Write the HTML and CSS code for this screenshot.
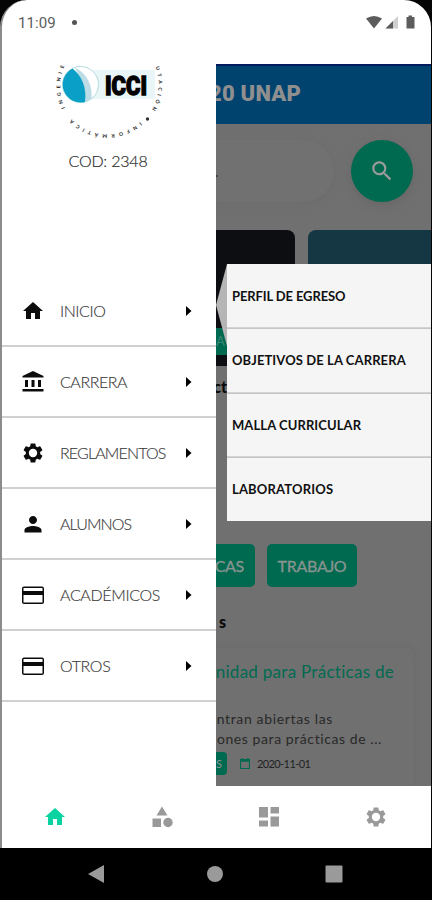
FILE: index.html
```html
<!DOCTYPE html>
<html lang="es">
<head>
<meta charset="utf-8">
<title>ICCI</title>
<link rel="stylesheet" href="styles.css">
</head>
<body>
<svg width="0" height="0" class="defs">
  <symbol id="home" viewBox="0 0 24 24"><path d="M10 20v-6h4v6h5v-8h3L12 3 2 12h3v8z"/></symbol>
  <symbol id="bank" viewBox="0 0 24 24"><path d="M4 10h3v7H4zM10.500 10h3v7h-3zM1.500 19h21v2.500h-21zM17 10h3v7h-3zM12 1 1.500 6v1.500h21V6z"/></symbol>
  <symbol id="gear" viewBox="0 0 24 24"><path d="M19.14 12.94c.04-.3.06-.61.06-.94 0-.32-.02-.64-.07-.94l2.03-1.58a.49.49 0 0 0 .12-.61l-1.92-3.32a.488.488 0 0 0-.59-.22l-2.39.96c-.5-.38-1.03-.7-1.62-.94l-.36-2.54a.484.484 0 0 0-.48-.41h-3.84c-.24 0-.43.17-.47.41l-.36 2.54c-.59.24-1.13.57-1.62.94l-2.39-.96c-.22-.08-.47 0-.59.22L2.74 8.87c-.12.21-.08.47.12.61l2.03 1.58c-.05.3-.09.63-.09.94s.02.64.07.94l-2.03 1.58a.49.49 0 0 0-.12.61l1.92 3.32c.12.22.37.29.59.22l2.39-.96c.5.38 1.03.7 1.62.94l.36 2.54c.05.24.24.41.48.41h3.84c.24 0 .44-.17.47-.41l.36-2.54c.59-.24 1.13-.56 1.62-.94l2.39.96c.22.08.47 0 .59-.22l1.92-3.32c.12-.22.07-.47-.12-.61l-2.01-1.58zM12 16.2a4.2 4.2 0 1 1 0-8.4 4.2 4.2 0 0 1 0 8.4z"/></symbol>
  <symbol id="person" viewBox="0 0 24 24"><path d="M12 12c2.210 0 4-1.790 4-4s-1.790-4-4-4-4 1.790-4 4 1.790 4 4 4zm0 2c-2.670 0-8.500 1.340-8.500 4v2.500h17V18c0-2.660-5.830-4-8.500-4z"/></symbol>
  <symbol id="card" viewBox="0 0 24 24"><path d="M21 3.500H3c-1.110 0-1.990.890-1.990 2L1 19c0 1.110.890 2 2 2h18c1.110 0 2-.890 2-2V5.500c0-1.110-.890-2-2-2zm.5 16h-19V12h19zm0-11.500h-19V5h19z"/></symbol>
  <symbol id="shapes" viewBox="0 0 24 24"><path d="M12 1.500 6.500 10.500h11zM2.500 13.500h8.500v8.500H2.500z"/><circle cx="18" cy="17.500" r="4.700"/></symbol>
  <symbol id="dash" viewBox="0 0 24 24"><path d="M2 2h9v10.500H2zM2 15.500h9v6H2zM13.500 11.500h8.500v10h-8.500zM13.500 2h8.500v6.500h-8.500z"/></symbol>
  <symbol id="search" viewBox="0 0 24 24"><path d="M15.500 14h-.790l-.280-.270A6.471 6.471 0 0 0 16 9.500 6.500 6.500 0 1 0 9.500 16c1.610 0 3.090-.590 4.230-1.570l.270.280v.790l5 4.990L20.490 19l-4.990-5zm-6 0C7.010 14 5 11.990 5 9.500S7.010 5 9.500 5 14 7.010 14 9.500 11.990 14 9.500 14z"/></symbol>
  <symbol id="caret" viewBox="0 0 6 10"><path d="M0 0l5.500 5L0 10z"/></symbol>
</svg>

<div class="phone">
  <header class="status">
    <span class="clock">11:09</span>
    <span class="dot"></span>
    <svg class="signals" viewBox="0 0 50 16">
      <path d="M0 3.500q8-5 16 0L8 13.500z"/>
      <path class="faint" d="M32 1v12.500H19.500z"/><path d="M27 6v7.500h-7.500z"/>
      <path d="M40.500 2h2V.500H46V2h2.500v11.500h-8z"/>
    </svg>
  </header>

  <main class="main">
    <nav class="drawer">
      <div class="brand">
        <svg class="logo" width="120" height="84" viewBox="48 60 120 84">
          <rect x="80" y="70" width="74" height="29" fill="#eaf5f7"/>
          <circle cx="79.500" cy="84.500" r="18" fill="#fff" stroke="#9fd3d6" stroke-width=".8"/>
          <path d="M74 67.500C86 73 92 86 90.500 98.500Q87 101.500 82 102.500L83 89z" fill="#bcdce6"/>
          <path d="M71.500 68.500C81 76 86 88 84 102A18 18 0 0 1 71.500 68.500z" fill="#0a9fc6"/>
          <text class="mark" x="104" y="94.500" textLength="42" lengthAdjust="spacingAndGlyphs">ICCI</text>
          <path id="arcR" d="M154.500 67A50 50 0 0 1 150.500 110" fill="none"/>
          <path id="arcB" d="M139 122A50 50 0 0 1 71 119.500" fill="none"/>
          <path id="arcL" d="M64 108A50 50 0 0 1 64 65" fill="none"/>
          <g class="ring">
            <text><textPath href="#arcR" textLength="44">UTACIÓN</textPath></text>
            <text><textPath href="#arcB" textLength="75">INFORMÁTICA</textPath></text>
            <text><textPath href="#arcL" textLength="43">INGENIE</textPath></text>
          </g>
          <circle cx="146.500" cy="119" r="1.700" fill="#333"/>
        </svg>
        <div class="cod">COD: 2348</div>
      </div>
      <a class="item"><svg class="ico"><use href="#home"/></svg><span class="l1">INICIO</span><svg class="caret"><use href="#caret"/></svg></a>
      <a class="item"><svg class="ico"><use href="#bank"/></svg><span class="l2">CARRERA</span><svg class="caret"><use href="#caret"/></svg></a>
      <a class="item"><svg class="ico"><use href="#gear"/></svg><span class="l3">REGLAMENTOS</span><svg class="caret"><use href="#caret"/></svg></a>
      <a class="item"><svg class="ico"><use href="#person"/></svg><span class="l4">ALUMNOS</span><svg class="caret"><use href="#caret"/></svg></a>
      <a class="item"><svg class="ico"><use href="#card"/></svg><span class="l5">ACADÉMICOS</span><svg class="caret"><use href="#caret"/></svg></a>
      <a class="item"><svg class="ico"><use href="#card"/></svg><span class="l6">OTROS</span><svg class="caret"><use href="#caret"/></svg></a>
    </nav>

    <section class="page">
      <div class="appbar"><span>20 UNAP</span></div>
      <div class="searchrow">
        <div class="field"><i></i></div>
        <div class="go"><svg><use href="#search"/></svg></div>
      </div>
      <div class="slides">
        <div class="slide night"><span class="tag">A</span></div>
        <div class="slide teal"></div>
      </div>
      <div class="clip h1"><span>ct</span></div>
      <div class="chips">
        <div class="chip first"><span>CAS</span></div>
        <div class="chip"><span>TRABAJO</span></div>
      </div>
      <div class="clip h2"><span>s</span></div>
      <article class="post">
        <div class="title"><span>nidad para Prácticas de</span></div>
        <div class="body b1"><span>ntran abiertas las</span></div>
        <div class="body b2"><span>ones para prácticas de ...</span></div>
        <div class="meta">
          <span class="badge">S</span>
          <svg class="cal" viewBox="0 0 10 11"><path d="M0 1h1.500V0h1.300v1h4.400V0h1.300v1H10v10H0zM1.100 3.800v6.100h7.800V3.800z" fill-rule="evenodd"/></svg>
          <span class="date">2020-11-01</span>
        </div>
      </article>
    </section>

    <div class="submenu">
      <a class="s1"><span>PERFIL DE EGRESO</span></a>
      <a class="s2"><span>OBJETIVOS DE LA CARRERA</span></a>
      <a class="s3"><span>MALLA CURRICULAR</span></a>
      <a class="s4"><span>LABORATORIOS</span></a>
    </div>
  </main>

  <footer class="tabs">
    <svg class="on"><use href="#home"/></svg>
    <svg><use href="#shapes"/></svg>
    <svg><use href="#dash"/></svg>
    <svg><use href="#gear"/></svg>
  </footer>
</div>
<div class="sysnav">
  <svg viewBox="0 0 18 20"><path d="M1 10 17 1v18z"/></svg>
  <svg viewBox="0 0 18 20"><circle cx="9" cy="10" r="8"/></svg>
  <svg viewBox="0 0 18 20"><rect x=".5" y="1.500" width="17" height="17" rx="1"/></svg>
</div>
</body>
</html>
```
FILE: styles.css
```css
* { box-sizing: border-box; }
body { margin: 0; width: 432px; height: 900px; background: #050505; overflow: hidden; font-family: Lato, "Open Sans", sans-serif; }
.defs { display: block; }
.phone { height: 848px; width: 431px; border-left: 2px solid #8b8b8b; border-radius: 27px 27px 0 0; background: #fff; overflow: hidden; }
span { white-space: nowrap; }

.status { height: 64px; padding: 15px 15px 0 16px; display: flex; align-items: flex-start; color: #5c5c5c; }
.clock { font: 15px/16px Roboto, sans-serif; letter-spacing: .1px; }
.dot { width: 5px; height: 5px; border-radius: 50%; background: #555; margin: 5px 0 0 16px; }
.signals { width: 50px; height: 16px; margin-left: auto; fill: #5c5c5c; }
.signals .faint { fill: #cfcfcf; }

.main { position: relative; display: flex; height: 722px; }
.drawer { width: 214px; flex: none; }
.brand { height: 212px; display: flex; flex-direction: column; align-items: center; }
.logo { display: block; margin: -4px 0 0 0; }
.mark { font: 900 26px Roboto, sans-serif; fill: #000; stroke: #000; stroke-width: 1.300px; }
.ring { font: 900 5px Lato, sans-serif; fill: #333; }
.cod { font: 300 16px/20px Lato, sans-serif; letter-spacing: -.2px; color: #222; margin: 7px 2px 0 0; -webkit-text-stroke: .2px #444; }
.item { height: 71px; display: flex; align-items: center; padding: 0 24px 0 19px; border-bottom: 2px solid #cfd1d1; color: #333; font: 300 16px/20px Lato, sans-serif; -webkit-text-stroke: .15px #555; }
.l1 { letter-spacing: -.45px; }
.l2 { letter-spacing: -.45px; }
.l3 { letter-spacing: -.85px; }
.l4 { letter-spacing: -.9px; }
.l5 { letter-spacing: -.35px; }
.l6 { letter-spacing: -.35px; }
.ico { width: 24px; height: 24px; flex: none; margin-right: 15px; fill: #0c0c0c; }
.caret { width: 6px; height: 10px; margin-left: auto; fill: #000; }

.page { flex: none; width: 215px; background: #707070; overflow: hidden; }
.appbar { height: 60px; width: 215px; background: #00436f; border-top: 2px solid #001c5e; display: flex; align-items: center; justify-content: flex-end; padding: 0 130px 3px 0; font: 900 22px Roboto, sans-serif; letter-spacing: .2px; color: #8f8f8f; }
.searchrow { height: 106px; padding-top: 16px; display: flex; justify-content: space-between; }
.field { width: 118px; height: 62px; border-radius: 0 31px 31px 0; background: #717171; box-shadow: 0 1px 6px #6b6b6b; padding-top: 35px; }
.field i { display: block; width: 2px; height: 2px; background: #444; }
.go { width: 62px; height: 62px; margin-right: 18px; border-radius: 50%; background: #006a50; box-shadow: 0 3px 8px #666; display: grid; place-items: center; }
.go svg { width: 26px; height: 26px; fill: #9b9b9b; margin-right: 1px; }
.slides { height: 136px; display: flex; gap: 13px; }
.slide { flex: none; height: 136px; }
.night { width: 79px; background: #0c0e12; border-radius: 0 8px 0 0; padding-top: 98px; }
.tag { display: block; width: 34px; height: 27px; background: #006a50; color: #3c8674; font: 13px/27px Lato, sans-serif; }
.teal { width: 150px; background: #153643; border-radius: 8px 0 0 0; }
.clip { display: flex; justify-content: flex-end; color: #0a0a0a; font: 900 16px/20px Lato, sans-serif; }
.h1 { width: 11px; height: 20px; margin-top: 11px; }
.h2 { width: 10px; height: 20px; margin-top: 25px; }
.chips { display: flex; gap: 12px; margin-top: 147px; height: 43px; }
.chip { width: 90px; border-radius: 5px; background: #006a50; color: #899490; display: flex; align-items: center; justify-content: center; font: 16px Lato, sans-serif; letter-spacing: -.3px; -webkit-text-stroke: .3px #899490; }
.chip.first { width: 39px; border-radius: 0 5px 5px 0; justify-content: flex-end; padding-right: 11px; }
.post { width: 197px; margin-top: 16px; height: 160px; background: #707070; border-radius: 0 5px 5px 0; box-shadow: 0 0 6px #696969; padding-top: 13px; }
.title { height: 21px; width: 178px; display: flex; justify-content: flex-end; font: 17px/21px Lato, sans-serif; letter-spacing: .28px; color: #006b50; }
.body { height: 20px; display: flex; justify-content: flex-end; font: 14px/20px Lato, sans-serif; color: #292929; }
.b1 { width: 117px; margin-top: 27px; letter-spacing: .65px; }
.b2 { width: 166px; letter-spacing: .58px; }
.meta { display: flex; align-items: center; height: 23px; margin-top: 3px; }
.badge { width: 11px; height: 23px; background: #006a50; border-radius: 0 4px 4px 0; font: 11px/23px Lato, sans-serif; color: #8a9a95; overflow: hidden; }
.cal { width: 10px; height: 11px; margin: 0 7px 0 13px; fill: #006a50; }
.date { font: 11px Lato, sans-serif; letter-spacing: -.6px; color: #222; }

.submenu { position: absolute; left: 225px; top: 200px; width: 204px; height: 257px; background: #f5f5f5; }
.submenu::before { content: ""; position: absolute; left: -11px; top: 0; width: 11px; height: 82px; background: #b5b5b5; clip-path: polygon(100% 0, 0 50%, 100% 100%); }
.submenu a { display: flex; align-items: center; height: 64.300px; padding-left: 5px; font: bold 13px Lato, sans-serif; color: #111; }
.submenu a + a { box-shadow: 0 -1px 0 #d2d4d4, inset 0 1px 0 #c4c6c6; }
.s1 { letter-spacing: -.12px; }
.s2 { letter-spacing: .1px; }
.s3 { letter-spacing: .08px; }
.s4 { letter-spacing: .17px; }

.tabs { height: 62px; background: #fff; display: grid; grid-template-columns: repeat(4, 107.200px); align-items: center; justify-items: center; margin-left: -1px; }
.tabs svg { width: 24px; height: 24px; fill: #999; }
.tabs .on { fill: #0ad3a2; }
.sysnav { height: 52px; display: flex; gap: 101px; padding: 16px 0 0 87px; background: #000; }
.sysnav svg { width: 18px; height: 20px; fill: #9a9a9a; }
```
